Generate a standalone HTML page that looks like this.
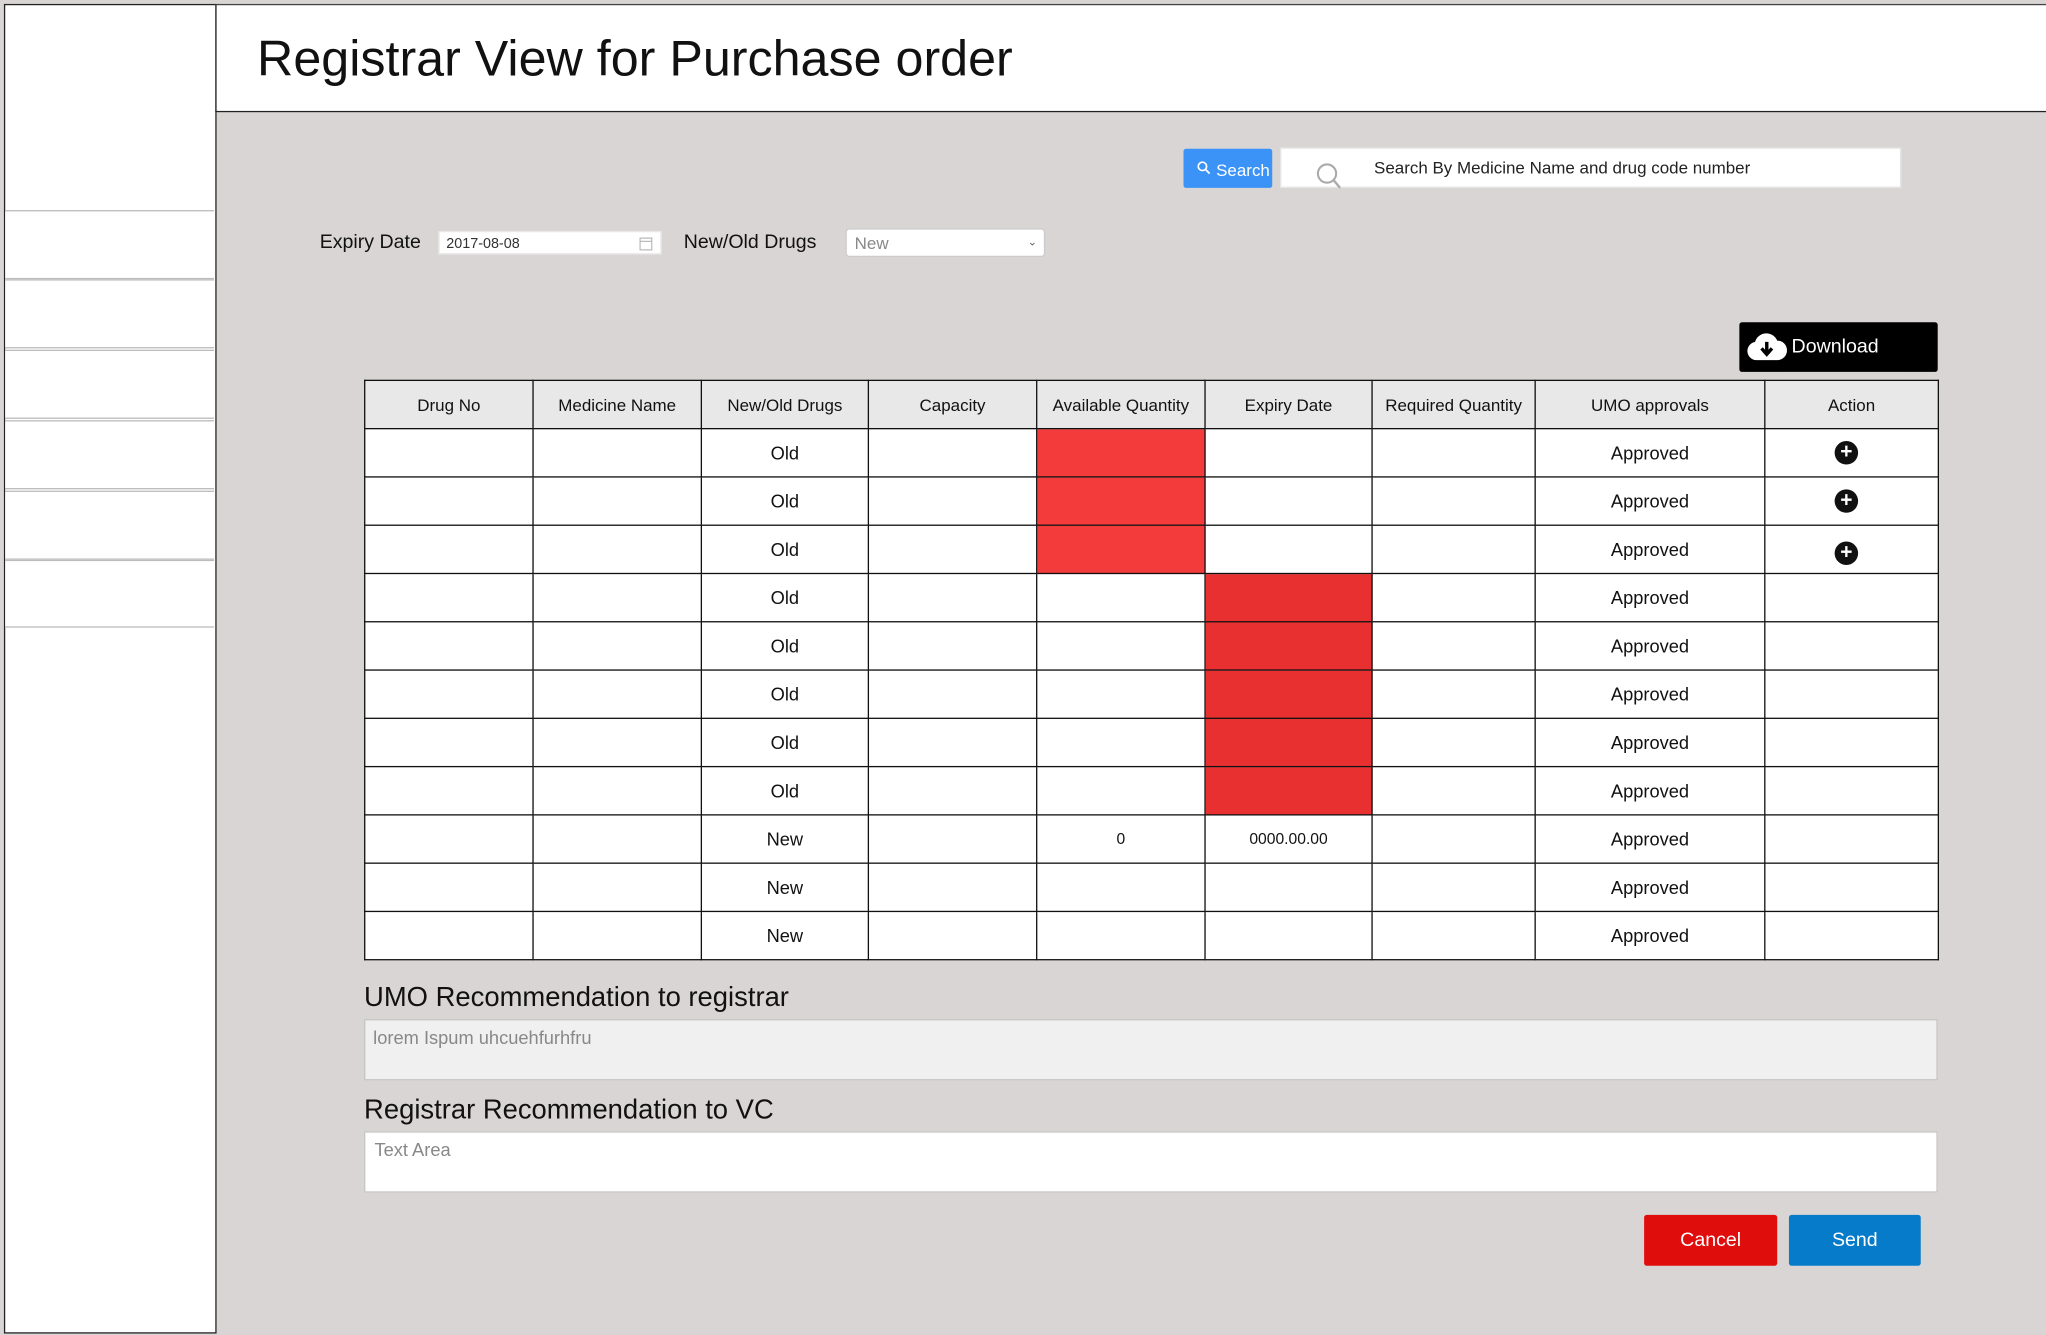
<!DOCTYPE html>
<html><head><meta charset="utf-8"><style>
html,body{margin:0;padding:0;width:2046px;height:1335px;overflow:hidden;background:#d9d5d5;}
#w{position:absolute;left:0;top:0;width:1568px;height:1023px;transform:scale(1.30485);transform-origin:0 0;font-family:"Liberation Sans",sans-serif;color:#111;}
.a{position:absolute;}
.side{left:3px;top:3px;width:161px;height:1017px;background:#fff;border:1px solid #222;}
.si{left:4px;width:160px;background:#fff;border-top:1px solid #bbb;border-bottom:1px solid #bbb;box-sizing:border-box;}
table{position:absolute;left:279px;top:291px;border-collapse:collapse;table-layout:fixed;}
td,th{border:1px solid #111;height:36px;padding:0;text-align:center;font-size:14px;font-weight:normal;background:#fff;}
th{background:#e8e8e8;font-size:13px;}
.r1{background:#f43b3b}.r2{background:#e83030}
.plus{display:inline-block;width:18px;height:18px;border-radius:50%;background:#111;color:#fff;font-size:16px;line-height:17px;font-weight:bold;vertical-align:middle}
</style></head><body><div id="w">
<div class="a side"></div>
<div class="a si" style="top:161px;height:53px"></div>
<div class="a si" style="top:214px;height:53px"></div>
<div class="a si" style="top:268px;height:53px"></div>
<div class="a si" style="top:322px;height:53px"></div>
<div class="a si" style="top:376px;height:53px"></div>
<div class="a si" style="top:429px;height:52px"></div>
<div class="a" style="left:165px;top:3px;width:1403px;height:81px;background:#fff;border-left:1px solid #222;border-top:1px solid #444;border-bottom:1px solid #222;"></div>
<div class="a" style="left:197px;top:24px;font-size:38.5px;">Registrar View for Purchase order</div>

<div class="a" style="left:907px;top:114px;width:68px;height:30px;background:#3b93f7;border-radius:2px;color:#fff;font-size:13px;line-height:34px;">
<svg class="a" style="left:10px;top:9px" width="11" height="11" viewBox="0 0 11 11"><circle cx="4.5" cy="4.5" r="3.2" fill="none" stroke="#fff" stroke-width="1.3"/><path d="M7 7l3 3" stroke="#fff" stroke-width="1.4"/></svg>
<span class="a" style="left:25px;top:0">Search</span></div>
<div class="a" style="left:981px;top:113px;width:476px;height:31px;background:#fff;border:1px solid #e4e4e4;box-sizing:border-box;">
<svg class="a" style="left:26px;top:10px" width="22" height="22" viewBox="0 0 22 22"><circle cx="9" cy="9" r="7" fill="none" stroke="#aaa" stroke-width="1.6"/><path d="M14 14l5 6" stroke="#aaa" stroke-width="1.8"/></svg>
<span class="a" style="left:71px;top:7px;font-size:13px;color:#222">Search By Medicine Name and drug code number</span></div>

<div class="a" style="left:245px;top:177px;font-size:15px;">Expiry Date</div>
<div class="a" style="left:336px;top:177px;width:171px;height:18px;background:#fff;border:1px solid #e8e8e8;box-sizing:border-box;font-size:11px;color:#333;line-height:18px;padding-left:5px;">2017-08-08
<svg class="a" style="left:153px;top:3px" width="10" height="11" viewBox="0 0 10 11"><rect x="0.5" y="1.5" width="9" height="9" fill="none" stroke="#bbb"/><path d="M0.5 4h9" stroke="#bbb"/></svg></div>
<div class="a" style="left:524px;top:177px;font-size:15px;">New/Old Drugs</div>
<div class="a" style="left:648px;top:175px;width:153px;height:22px;background:#fff;border:1px solid #ccc;border-radius:3px;box-sizing:border-box;font-size:13px;color:#888;line-height:21px;padding-left:6px;">New<span class="a" style="right:5px;top:-1px;font-size:9px;color:#666">&#8964;</span></div>

<div class="a" style="left:1333px;top:247px;width:152px;height:38px;background:#000;border-radius:2px;color:#fff;">
<svg class="a" style="left:5px;top:7px" width="32" height="24" viewBox="0 0 32 24"><path d="M8 22a7 7 0 0 1-1-13.9A9 9 0 0 1 24 7a7.5 7.5 0 0 1 0 15z" fill="#fff"/><path d="M16 8v9M12 13l4 4.5 4-4.5" stroke="#000" stroke-width="2.6" fill="none"/></svg>
<span class="a" style="left:40px;top:10px;font-size:15px;">Download</span></div>

<table>
<colgroup><col style="width:129px"><col style="width:129px"><col style="width:128px"><col style="width:129px"><col style="width:129px"><col style="width:128px"><col style="width:125px"><col style="width:176px"><col style="width:133px"></colgroup>
<tr><th>Drug No</th><th>Medicine Name</th><th>New/Old Drugs</th><th>Capacity</th><th>Available Quantity</th><th>Expiry Date</th><th>Required Quantity</th><th>UMO approvals</th><th>Action</th></tr>
<tr><td></td><td></td><td>Old</td><td></td><td class="r1"></td><td></td><td></td><td>Approved</td><td><span class="plus" style="margin-right:8px">+</span></td></tr>
<tr><td></td><td></td><td>Old</td><td></td><td class="r1"></td><td></td><td></td><td>Approved</td><td><span class="plus" style="margin-right:8px">+</span></td></tr>
<tr><td></td><td></td><td>Old</td><td></td><td class="r1"></td><td></td><td></td><td>Approved</td><td><span class="plus" style="margin-right:8px;margin-top:5px">+</span></td></tr>
<tr><td></td><td></td><td>Old</td><td></td><td></td><td class="r2"></td><td></td><td>Approved</td><td></td></tr>
<tr><td></td><td></td><td>Old</td><td></td><td></td><td class="r2"></td><td></td><td>Approved</td><td></td></tr>
<tr><td></td><td></td><td>Old</td><td></td><td></td><td class="r2"></td><td></td><td>Approved</td><td></td></tr>
<tr><td></td><td></td><td>Old</td><td></td><td></td><td class="r2"></td><td></td><td>Approved</td><td></td></tr>
<tr><td></td><td></td><td>Old</td><td></td><td></td><td class="r2"></td><td></td><td>Approved</td><td></td></tr>
<tr><td></td><td></td><td>New</td><td></td><td style="font-size:12px">0</td><td style="font-size:12px">0000.00.00</td><td></td><td>Approved</td><td></td></tr>
<tr><td></td><td></td><td>New</td><td></td><td></td><td></td><td></td><td>Approved</td><td></td></tr>
<tr><td></td><td></td><td>New</td><td></td><td></td><td></td><td></td><td>Approved</td><td></td></tr>
</table>

<div class="a" style="left:279px;top:753px;font-size:21px;">UMO Recommendation to registrar</div>
<div class="a" style="left:279px;top:781px;width:1206px;height:47px;background:#f0f0f0;border:1px solid #c4c4c4;box-sizing:border-box;font-size:14px;color:#888;padding:5px 6px;">lorem Ispum uhcuehfurhfru</div>
<div class="a" style="left:279px;top:839px;font-size:21px;">Registrar Recommendation to VC</div>
<div class="a" style="left:279px;top:867px;width:1206px;height:47px;background:#fff;border:1px solid #c4c4c4;box-sizing:border-box;font-size:14px;color:#888;padding:5px 7px;">Text Area</div>

<div class="a" style="left:1260px;top:931px;width:102px;height:39px;background:#e00d0d;border-radius:2px;color:#fff;font-size:15px;text-align:center;line-height:39px;">Cancel</div>
<div class="a" style="left:1371px;top:931px;width:101px;height:39px;background:#067bc9;border-radius:2px;color:#fff;font-size:15px;text-align:center;line-height:39px;">Send</div>
</div></body></html>
